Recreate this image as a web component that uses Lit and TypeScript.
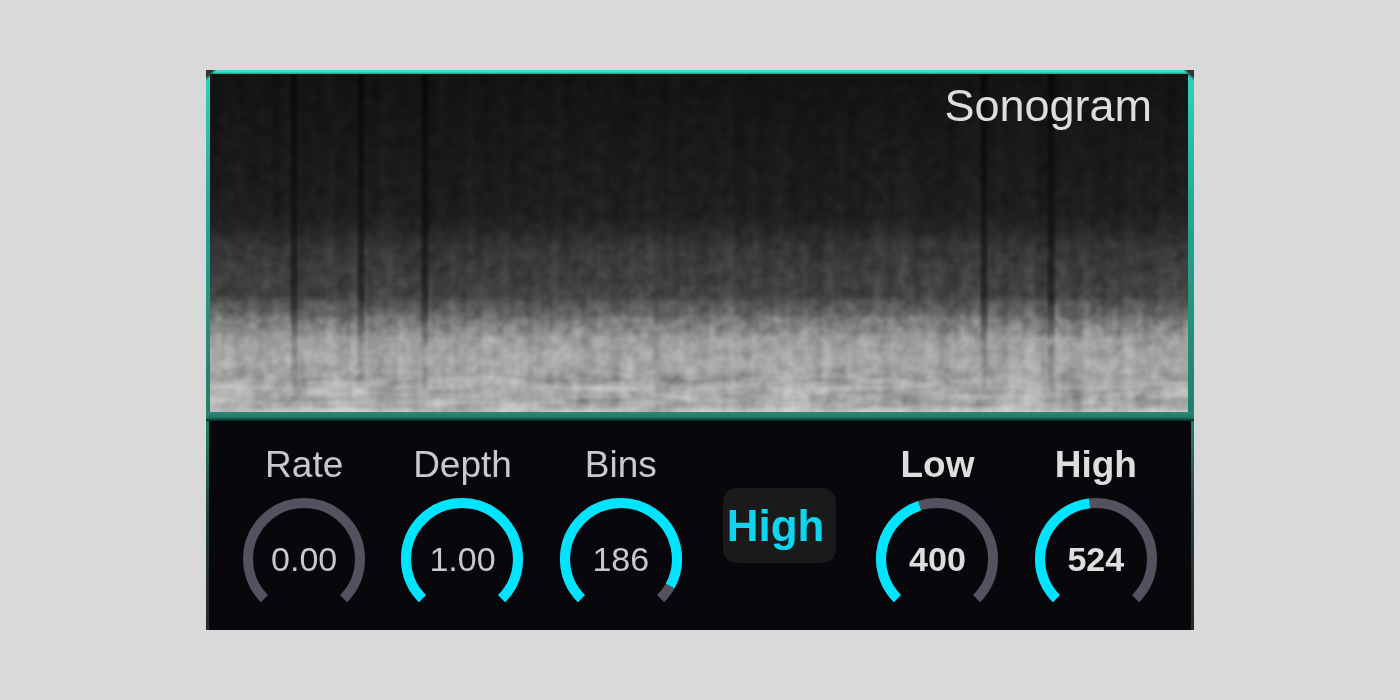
import { LitElement, html, svg, css } from "lit";
import { customElement, property, state } from "lit/decorators.js";
import { classMap } from "lit/directives/class-map.js";

const SWEEP = 270;
const CENTER = 62;
const RADIUS = 56;

/** Arc running clockwise from the lower-left stop over a share of the sweep. */
function arc(share: number): string {
  const point = (deg: number) => {
    const a = (deg * Math.PI) / 180;
    return `${(CENTER + RADIUS * Math.sin(a)).toFixed(2)} ${(CENTER - RADIUS * Math.cos(a)).toFixed(2)}`;
  };
  const large = share * SWEEP > 180 ? 1 : 0;
  return `M${point(-135)} A${RADIUS} ${RADIUS} 0 ${large} 1 ${point(-135 + share * SWEEP)}`;
}

@customElement("dial-knob")
export class DialKnob extends LitElement {
  @property() label = "";
  @property({ type: Number }) min = 0;
  @property({ type: Number }) max = 1;
  @property({ type: Number }) value = 0;
  @property({ type: Number }) digits = 0;
  @property({ type: Boolean }) strong = false;

  static styles = css`
    :host {
      display: block;
    }
    .knob {
      display: flex;
      flex-direction: column;
      align-items: center;
      gap: 12px;
      color: #c9c9cc;
    }
    .strong {
      font-weight: 700;
      color: #dededf;
    }
    .name {
      font-size: 37px;
      line-height: 40px;
    }
    .dial {
      display: grid;
      place-items: center;
      width: 124px;
      height: 124px;
    }
    .dial > * {
      grid-area: 1 / 1;
    }
    .ring {
      display: block;
      width: 124px;
      height: 124px;
      fill: none;
      stroke-width: 10;
    }
    .track {
      stroke: #54525e;
    }
    .fill {
      stroke: #00e5ff;
    }
    .value {
      font-size: 34px;
      line-height: 40px;
    }
    .range {
      width: 100%;
      height: 100%;
      margin: 0;
      opacity: 0;
      cursor: pointer;
    }
  `;

  private onInput(e: Event) {
    this.value = Number((e.target as HTMLInputElement).value);
  }

  render() {
    const share = (this.value - this.min) / (this.max - this.min);
    return html`
      <div class=${classMap({ knob: true, strong: this.strong })}>
        <label class="name" for="range">${this.label}</label>
        <div class="dial">
          <svg class="ring" viewBox="0 0 124 124" aria-hidden="true">
            <path class="track" d=${arc(1)}></path>
            ${share > 0 ? svg`<path class="fill" d=${arc(share)}></path>` : null}
          </svg>
          <output class="value" for="range">${this.value.toFixed(this.digits)}</output>
          <input
            class="range"
            id="range"
            type="range"
            min=${this.min}
            max=${this.max}
            step=${this.digits ? 0.01 : 1}
            .value=${String(this.value)}
            @input=${this.onInput}
          />
        </div>
      </div>
    `;
  }
}

const TONES: [number, string][] = [
  [0, "#121212"],
  [70, "#181818"],
  [140, "#1e1e1e"],
  [156, "#262626"],
  [172, "#353535"],
  [200, "#3d3d3d"],
  [222, "#434343"],
  [229, "#555555"],
  [239, "#636363"],
  [246, "#7a7a7a"],
  [258, "#8a8a8a"],
  [264, "#9c9c9c"],
  [288, "#a8a8a8"],
  [306, "#9f9f9f"],
  [314, "#b2b2b2"],
  [326, "#a5a5a5"],
  [333, "#aeaeae"],
  [338, "#c2c0c2"],
];
const DROPOUTS = [84, 151, 215, 774, 841];
/* Stacked widths that give each dropout a soft edge. */
const WIDTHS = [9, 6, 3];

@customElement("sonogram-view")
export class SonogramView extends LitElement {
  static styles = css`
    :host {
      display: block;
    }
    .plot {
      display: block;
      width: 100%;
      height: 338px;
    }
    .noise {
      mix-blend-mode: overlay;
    }
  `;

  render() {
    return html`
      <svg class="plot" viewBox="0 0 978 338" preserveAspectRatio="none" role="img" aria-label="Sonogram">
        <defs>
          <linearGradient id="tone" x1="0" y1="0" x2="0" y2="1">
            ${TONES.map(([y, c]) => svg`<stop offset=${y / 338} stop-color=${c}></stop>`)}
          </linearGradient>
          <linearGradient id="drop" x1="0" y1="0" x2="0" y2="1">
            <stop offset="0" stop-color="#000000" stop-opacity=".24"></stop>
            <stop offset=".65" stop-color="#101010" stop-opacity=".26"></stop>
            <stop offset=".74" stop-color="#282828" stop-opacity=".2"></stop>
            <stop offset=".8" stop-color="#505050" stop-opacity=".13"></stop>
            <stop offset=".92" stop-color="#606060" stop-opacity=".07"></stop>
            <stop offset=".94" stop-color="#606060" stop-opacity="0"></stop>
          </linearGradient>
          <filter id="grain" x="0" y="0" width="1" height="1" color-interpolation-filters="sRGB">
            <feTurbulence type="fractalNoise" baseFrequency=".08" numOctaves="2" seed="4"></feTurbulence>
            <feColorMatrix values=".28 0 0 0 .36  .28 0 0 0 .36  .28 0 0 0 .36  0 0 0 0 1"></feColorMatrix>
          </filter>
          <filter id="columns" x="0" y="0" width="1" height="1" color-interpolation-filters="sRGB">
            <feTurbulence type="fractalNoise" baseFrequency=".07 .004" numOctaves="2" seed="9"></feTurbulence>
            <feColorMatrix values=".2 0 0 0 .4  .2 0 0 0 .4  .2 0 0 0 .4  0 0 0 0 1"></feColorMatrix>
          </filter>
          <filter id="rows" x="0" y="0" width="1" height="1" color-interpolation-filters="sRGB">
            <feTurbulence type="fractalNoise" baseFrequency=".018 .09" numOctaves="2" seed="2"></feTurbulence>
            <feColorMatrix values=".4 0 0 0 .3  .4 0 0 0 .3  .4 0 0 0 .3  0 0 0 0 1"></feColorMatrix>
          </filter>
          <linearGradient id="fade" x1="0" y1="0" x2="0" y2="1">
            <stop offset="0" stop-color="#000000"></stop>
            <stop offset=".4" stop-color="#ffffff"></stop>
          </linearGradient>
          <mask id="lower">
            <rect y="288" width="978" height="50" fill="url(#fade)"></rect>
          </mask>
        </defs>
        <rect width="978" height="338" fill="url(#tone)"></rect>
        ${DROPOUTS.map((x) =>
          WIDTHS.map((w) => svg`<rect x=${x - w / 2} width=${w} height="338" fill="url(#drop)"></rect>`),
        )}
        <rect class="noise" width="978" height="338" filter="url(#grain)"></rect>
        <rect class="noise" width="978" height="338" filter="url(#columns)"></rect>
        <rect class="noise" y="288" width="978" height="50" filter="url(#rows)" mask="url(#lower)"></rect>
      </svg>
    `;
  }
}

@customElement("app-root")
export class AppRoot extends LitElement {
  @state() private quality = "High";

  static styles = css`
    :host {
      display: grid;
      place-items: center;
      box-sizing: border-box;
      min-height: 100vh;
      padding: 24px;
      background: #d9d9d9;
      font-family: "Liberation Sans", Arial, sans-serif;
    }
    .panel {
      width: 100%;
      max-width: 988px;
      background: linear-gradient(#3be0cb 0, #3be0cb 2px, #0f9c88 4px, #2fd0ba 8px, #22a894 25%, #238a78 50%, #207868 66%, #22403c 80%, #26292b 100%);
    }
    .screen {
      position: relative;
      padding: 4px 6px 0 4px;
    }
    .screen::before,
    .screen::after {
      content: "";
      position: absolute;
      top: 0;
      width: 12px;
      height: 12px;
    }
    .screen::before {
      left: 0;
      background: linear-gradient(135deg, #333336 5px, transparent 8px);
    }
    .screen::after {
      right: 0;
      background: linear-gradient(225deg, #333336 5px, transparent 8px);
    }
    .title {
      position: absolute;
      top: 10px;
      right: 42px;
      margin: 0;
      font-size: 45px;
      font-weight: 400;
      line-height: 52px;
      color: #dedede;
    }
    .divider {
      height: 9px;
      background: linear-gradient(#2b8a79, #217866 60%, #06251f);
    }
    .controls {
      display: grid;
      grid-template-columns: repeat(6, 1fr);
      align-items: center;
      margin: 0 3px;
      padding: 24px 16px 9px;
      background: #08080c;
    }
    .mode {
      justify-self: center;
      width: 113px;
      height: 75px;
      margin-bottom: 15px;
      padding: 0 0 0 4px;
      border: 0;
      border-radius: 14px;
      background: #1a1a1b;
      color: #0fd6ee;
      font: 700 44px / 52px "Liberation Sans", Arial, sans-serif;
      text-align: left;
      cursor: pointer;
    }
  `;

  private toggle() {
    this.quality = this.quality === "High" ? "Low" : "High";
  }

  render() {
    return html`
      <main class="panel">
        <section class="screen">
          <sonogram-view></sonogram-view>
          <h1 class="title">Sonogram</h1>
        </section>
        <div class="divider"></div>
        <section class="controls">
          <dial-knob label="Rate" .value=${0} .digits=${2}></dial-knob>
          <dial-knob label="Depth" .value=${1} .digits=${2}></dial-knob>
          <dial-knob label="Bins" .max=${198} .value=${186}></dial-knob>
          <button class="mode" type="button" @click=${this.toggle}>${this.quality}</button>
          <dial-knob label="Low" strong .max=${924} .value=${400}></dial-knob>
          <dial-knob label="High" strong .max=${1103} .value=${524}></dial-knob>
        </section>
      </main>
    `;
  }
}
